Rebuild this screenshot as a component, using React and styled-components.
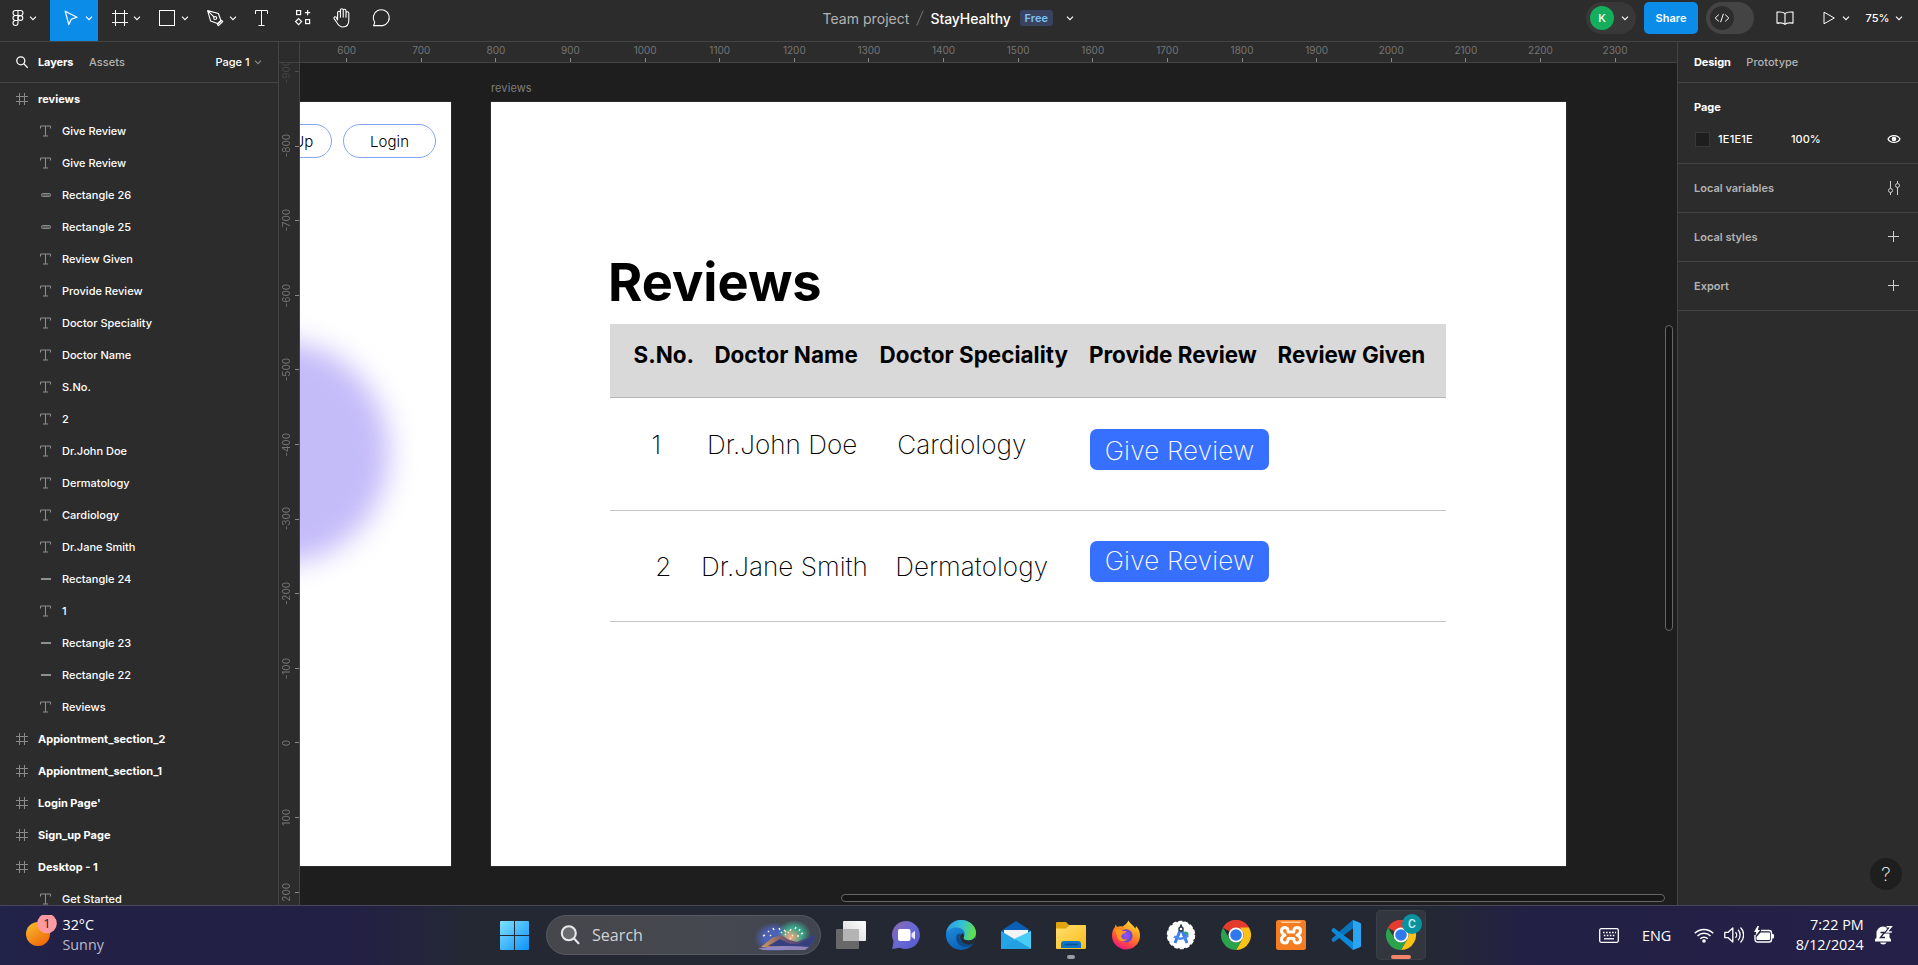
import React from "react";
import styled, { createGlobalStyle, css } from "styled-components";

const GlobalStyle = createGlobalStyle`
  * { box-sizing: border-box; }
  html, body { margin: 0; padding: 0; background: #1e1e1e; }
  body { font-family: Inter, "Liberation Sans", sans-serif; overflow: hidden; }
`;

const line = "#444444";
const panel = "#2c2c2c";

/* ---------- shell ---------- */

const Shell = styled.div`
  display: flex;
  flex-direction: column;
  width: 1918px;
  height: 965px;
  overflow: hidden;
  color: #fff;
  font-size: 11px;
`;

const Workspace = styled.div`
  display: flex;
  flex: 1;
  min-height: 0;
`;

/* ---------- top bar ---------- */

const TopBar = styled.header`
  display: flex;
  justify-content: space-between;
  height: 42px;
  flex: none;
  background: ${panel};
  border-bottom: 1px solid ${line};
`;

const ToolGroup = styled.div`
  display: flex;
  width: 820px;
`;

const Tool = styled.div`
  display: flex;
  align-items: center;
  width: ${(p) => p.$width}px;
  height: 41px;
  padding: 0 4px 5px 8px;
  background: ${(p) => (p.$active ? "#0c8ce9" : "transparent")};
  svg { flex: none; }
`;

const TitleGroup = styled.div`
  display: flex;
  align-items: center;
  flex: 1;
  height: 36px;
  padding-left: 2.5px;
  font-size: 14px;
  white-space: nowrap;
`;

const ProjectName = styled.span`
  color: #b3b3b3;
  letter-spacing: 0.04px;
`;

const Slash = styled.span`
  width: 8px;
  height: 16px;
  margin: 0 6px 0 7px;
  display: flex;
`;

const FileName = styled.span`
  font-weight: 500;
  letter-spacing: -0.08px;
`;

const PlanBadge = styled.span`
  display: flex;
  align-items: center;
  justify-content: center;
  width: 33px;
  height: 16px;
  margin: 0 9px 0 9px;
  border-radius: 3px;
  background: #394360;
  color: #7cc4f8;
  font-size: 11px;
  font-weight: 600;
`;

const ActionGroup = styled.div`
  display: flex;
  align-items: center;
  width: 332px;
  height: 36px;
`;

const AvatarPill = styled.div`
  display: flex;
  align-items: center;
  gap: 3px;
  width: 50px;
  height: 32px;
  padding-left: 4px;
  border-radius: 16px;
  background: #383838;
`;

const Avatar = styled.span`
  display: flex;
  align-items: center;
  justify-content: center;
  width: 24px;
  height: 24px;
  border-radius: 50%;
  background: #14ae5c;
  font-size: 11px;
  font-weight: 500;
`;

const ShareButton = styled.button`
  width: 54px;
  height: 32px;
  margin: 0 8px;
  padding: 0;
  border: 0;
  border-radius: 5px;
  background: #0c8ce9;
  color: #fff;
  font: 600 11px Inter, sans-serif;
`;

const DevToggle = styled.div`
  display: flex;
  align-items: center;
  width: 48px;
  height: 32px;
  padding-left: 4px;
  border-radius: 16px;
  background: #444;
`;

const DevKnob = styled.span`
  display: flex;
  align-items: center;
  justify-content: center;
  width: 24px;
  height: 24px;
  border-radius: 50%;
  background: #2c2c2c;
`;

const ActionIcon = styled.span`
  display: flex;
  margin-left: ${(p) => p.$ml}px;
`;

const ZoomLevel = styled.span`
  margin: 0 0 0 15px;
  width: 24px;
  font-weight: 500;
`;

/* ---------- left panel ---------- */

const LeftPanel = styled.aside`
  width: 279px;
  flex: none;
  background: ${panel};
  border-right: 1px solid ${line};
  overflow: hidden;
`;

const PanelTabs = styled.div`
  display: flex;
  align-items: center;
  height: 41px;
  padding: 0 15px 0 16px;
  border-bottom: 1px solid ${line};
  font-weight: 500;
`;

const Tab = styled.span`
  margin-right: 15.5px;
  color: ${(p) => (p.$active ? "#fff" : "#b3b3b3")};
  font-weight: ${(p) => (p.$active ? 700 : 500)};
  letter-spacing: ${(p) => (p.$active ? "-0.1px" : "0.05px")};
`;

const PageName = styled.span`
  margin-left: auto;
  margin-right: 1.5px;
`;

const LayerRow = styled.div`
  display: flex;
  align-items: center;
  height: 32px;
  padding-left: ${(p) => (p.$child ? 38 : 14)}px;
  font-weight: ${(p) => (p.$child ? 500 : 700)};
  white-space: nowrap;
`;

const LayerIcon = styled.span`
  display: flex;
  width: 16px;
  height: 16px;
  margin-right: 8px;
`;

/* ---------- canvas ---------- */

const CanvasArea = styled.main`
  display: grid;
  grid-template-columns: 21px 1fr;
  grid-template-rows: 21px 1fr;
  flex: 1;
  min-width: 0;
  background: #1e1e1e;
`;

const RulerCorner = styled.div`
  background: ${panel};
  border-right: 1px solid ${line};
  border-bottom: 1px solid ${line};
`;

const TopRuler = styled.div`
  display: flex;
  padding-left: 9.4px;
  overflow: hidden;
  background: ${panel};
  border-bottom: 1px solid ${line};
`;

const TopMark = styled.div`
  display: flex;
  flex-direction: column;
  align-items: center;
  justify-content: space-between;
  flex: none;
  width: 74.62px;
  height: 20px;
  padding-top: 1.5px;
  color: #757575;
  font-size: 10px;
  line-height: 12px;
  &::after {
    content: "";
    width: 1px;
    height: 4px;
    background: #8a8a8a;
  }
`;

const SideRuler = styled.div`
  overflow: hidden;
  min-height: 0;
  background: ${panel};
  border-right: 1px solid ${line};
`;

const SideMarks = styled.div`
  display: flex;
  flex-direction: column;
  margin-top: -28.9px;
`;

const SideMark = styled.div`
  display: flex;
  align-items: center;
  justify-content: space-between;
  flex: none;
  height: 74.62px;
  padding-left: 1px;
  color: #757575;
  opacity: ${(p) => (p.$faded ? 0.35 : 1)};
  font-size: 10px;
  line-height: 12px;
  span {
    writing-mode: vertical-rl;
    transform: rotate(180deg);
  }
  &::after {
    content: "";
    width: 4px;
    height: 1px;
    background: #8a8a8a;
  }
`;

const Stage = styled.div`
  position: relative;
  overflow: hidden;
  min-width: 0;
  min-height: 0;
`;

const Artboard = styled.section`
  position: absolute;
  left: ${(p) => p.$x}px;
  top: 39px;
  width: ${(p) => p.$w}px;
  height: 764px;
  background: #fff;
  box-shadow: 0 0 0 0.5px #55555577;
  overflow: hidden;
`;

const ArtboardLabel = styled.span`
  position: absolute;
  left: 191px;
  top: 18px;
  color: #7d7d7d;
  font-size: 11px;
  line-height: 14px;
  letter-spacing: 0.1px;
`;

const BlurredCircle = styled.div`
  position: absolute;
  left: -134px;
  top: 239px;
  width: 223px;
  height: 223px;
  border-radius: 50%;
  background: #c4bbf9;
  filter: blur(14px);
`;

const PillButton = styled.div`
  position: absolute;
  left: ${(p) => p.$x}px;
  top: 22px;
  display: flex;
  align-items: center;
  justify-content: center;
  width: 93px;
  height: 34px;
  border: 1px solid #85a5fb;
  border-radius: 17px;
  color: #000;
  font-size: 15px;
  font-weight: 290;
  letter-spacing: 0.1px;
`;

/* A text node is placed by the left end of its baseline. */
const TextNode = styled.span`
  position: absolute;
  left: ${(p) => p.$x}px;
  top: ${(p) => p.$base - p.$size * 0.864}px;
  font-size: ${(p) => p.$size}px;
  line-height: 1;
  white-space: pre;
  color: #000;
  ${(p) =>
    p.$kind === "title" &&
    css`
      font-weight: 680;
    `}
  ${(p) =>
    p.$kind === "head" &&
    css`
      font-weight: 650;
      letter-spacing: 0.03px;
    `}
  ${(p) =>
    p.$kind === "cell" &&
    css`
      font-weight: 250;
      letter-spacing: 0.02px;
    `}
`;

const HeadBand = styled.div`
  position: absolute;
  left: 119px;
  top: 222px;
  width: 836px;
  height: 74px;
  background: #d9d9d9;
  border-bottom: 1px solid #b7b7b7;
`;

const RowLine = styled.div`
  position: absolute;
  left: 119px;
  top: ${(p) => p.$y}px;
  width: 836px;
  height: 1px;
  background: #c4c4c4;
`;

const ReviewButton = styled.div`
  position: absolute;
  left: 599px;
  top: ${(p) => p.$y}px;
  width: 179px;
  height: 41px;
  border-radius: 7px;
  background: #3770ff;
  color: #fff;
  font-size: 26px;
  font-weight: 250;
  line-height: ${(p) => p.$lh}px;
  text-align: center;
  letter-spacing: 0.22px;
  white-space: nowrap;
`;

const ScrollThumb = styled.div`
  position: absolute;
  background: #161616;
  border: 1px solid #666;
  border-radius: 4px;
  ${(p) =>
    p.$vertical
      ? css`
          left: 1365px;
          top: 262px;
          width: 8px;
          height: 306px;
        `
      : css`
          left: 541px;
          top: 831px;
          width: 824px;
          height: 8px;
        `}
`;

/* ---------- right panel ---------- */

const RightPanel = styled.aside`
  position: relative;
  width: 241px;
  flex: none;
  background: ${panel};
  border-left: 1px solid ${line};
`;

const PageSection = styled.div`
  height: 81px;
  padding: 8px 16px 0;
  border-bottom: 1px solid ${line};
`;

const SectionTitle = styled.div`
  height: 32px;
  line-height: 32px;
  font-weight: 700;
`;

const FillRow = styled.div`
  display: flex;
  align-items: center;
  height: 32px;
  font-weight: 500;
`;

const Swatch = styled.span`
  width: 15px;
  height: 15px;
  margin: 0 8px 0 1px;
  background: #1e1e1e;
  border: 1px solid #383838;
`;

const FillHex = styled.span`
  width: 73px;
  letter-spacing: 0.22px;
`;

const RightIcon = styled.span`
  display: flex;
  margin-left: auto;
`;

const CollapsedSection = styled.div`
  display: flex;
  align-items: center;
  height: 49px;
  padding: 0 16px;
  border-bottom: 1px solid ${line};
  color: #b3b3b3;
  font-weight: 600;
`;

const HelpButton = styled.div`
  position: absolute;
  right: 16px;
  bottom: 15px;
  display: flex;
  align-items: center;
  justify-content: center;
  width: 32px;
  height: 32px;
  border-radius: 50%;
  background: #1e1e1e;
  font-size: 19px;
  font-weight: 250;
`;

/* ---------- taskbar ---------- */

const Taskbar = styled.footer`
  display: flex;
  height: 60px;
  flex: none;
  border-top: 1px solid #49485a;
  background: linear-gradient(90deg, #212349 0, #232046 60px, #232046 350px, #242833 470px, #242833 1430px, #232046 1530px, #242047 100%);
  font-family: "Open Sans", "Noto Sans", sans-serif;
`;

const Weather = styled.div`
  display: flex;
  align-items: flex-start;
  width: 490px;
  padding: 9px 0 0 24px;
`;

const WeatherText = styled.div`
  margin-left: 4.5px;
  font-size: 14.3px;
  line-height: 20px;
  div + div { color: #b9b9c8; }
`;

const AppRow = styled.div`
  display: flex;
  align-items: flex-start;
  gap: 5px;
  padding-top: 4px;
  width: 1109px;
`;

const AppSlot = styled.div`
  position: relative;
  display: flex;
  align-items: center;
  justify-content: center;
  width: 50px;
  height: 50px;
  border-radius: 5px;
  ${(p) =>
    p.$active &&
    css`
      background: #32363f;
      box-shadow: inset 0 0 0 1px #3b3f48;
    `}
  ${(p) =>
    p.$mark &&
    css`
      &::after {
        content: "";
        position: absolute;
        bottom: 1px;
        left: 50%;
        width: ${p.$active ? 20 : 8}px;
        height: 4px;
        margin-left: ${p.$active ? -10 : -4}px;
        border-radius: 2px;
        background: ${p.$mark};
      }
    `}
`;

const SearchBox = styled.div`
  display: flex;
  align-items: center;
  width: 275px;
  height: 40px;
  margin: 5px 0 0 1px;
  padding: 0 4px 0 13px;
  border: 1px solid #575a62;
  border-radius: 20px;
  background: linear-gradient(90deg, #46474c, #45484f 60%, #41454f);
  color: #d2d2d4;
  font-size: 16.1px;
`;

const SearchLabel = styled.span`
  flex: 1;
  margin-left: 12px;
`;

const Tray = styled.div`
  display: flex;
  align-items: center;
  flex: 1;
  padding-bottom: 1px;
  font-size: 14.4px;
`;

const TrayItem = styled.span`
  display: flex;
  margin-left: ${(p) => p.$ml}px;
`;

const Clock = styled.div`
  width: 82px;
  margin-right: 11px;
  text-align: right;
  line-height: 20px;
`;

/* ---------- interface icons ---------- */

const Svg = ({ w = 16, h = w, box, sw = 1, stroke = "#fff", children }) => (
  <svg width={w} height={h} viewBox={box || `0 0 ${w} ${h}`} fill="none" stroke={stroke} strokeWidth={sw}>
    {children}
  </svg>
);

const Chevron = ({ color = "#fff" }) => (
  <Svg w={10} stroke={color} sw={1.1}>
    <path d="M2 3.6 5 6.6 8 3.6" />
  </Svg>
);

const FigmaIcon = () => (
  <Svg w={20} h={22} box="1 0 20 22" sw={1.1}>
    <path d="M11 3.500H8.500a2.400 2.400 0 0 0 0 5H11zM11 3.500h2.500a2.400 2.400 0 0 1 0 5H11zM11 8.500H8.500a2.500 2.500 0 0 0 0 5H11zM11 13.500H8.500a2.500 2.500 0 1 0 2.500 2.500z" />
    <circle cx="13.400" cy="11" r="2.400" />
  </Svg>
);
const MoveIcon = () => (
  <Svg w={26} sw={1.2}><path d="M7.200 6.200 19 12.200l-5.600 1.900-2.600 5.500z" strokeLinejoin="round" /></Svg>
);
const FrameIcon = () => (
  <Svg w={26}><path d="M9.500 5v16M18.500 5v16M6 8.500h16M6 17.500h16" /></Svg>
);
const RectIcon = () => (
  <Svg w={26}><rect x="5.500" y="5.500" width="15" height="15" /></Svg>
);
const PenIcon = () => (
  <Svg w={26} sw={1.1}>
    <path d="M5.600 5.600 8.600 16.100l6.900 2.500 3.300-3.300-2.400-6.800zM5.600 5.600l6.800 6.700M15.400 19.600l4.200-4.200 1.100 1.100-4.200 4.200z" strokeLinejoin="round" />
    <circle cx="13.200" cy="13" r="1.500" />
  </Svg>
);
const TextIcon = () => (
  <Svg w={26}><path d="M5.500 9V5.500h12V9M11.500 5.500v15M8.500 20.500h6" /></Svg>
);
const ResourcesIcon = () => (
  <Svg w={26} sw={1.2}>
    <rect x="6.600" y="5.600" width="4" height="4" />
    <rect x="15.600" y="14.600" width="4" height="4" />
    <path d="M17.600 5v5.200M15 7.600h5.200M8.600 13.600l3 3-3 3-3-3z" />
  </Svg>
);
const HandIcon = () => (
  <Svg w={26} box="1 0.500 26 26" sw={1.1}>
    <path
      d="M8.600 15.400V8.200a1.400 1.400 0 0 1 2.800 0v4.600V5.600a1.400 1.400 0 0 1 2.800 0v7V6.200a1.400 1.400 0 0 1 2.800 0v6.600V8.600a1.400 1.400 0 0 1 2.800 0v7.200c0 4.600-2.600 6.700-5.800 6.700-3.400 0-4.600-1.700-6-4.200l-2.900-4.200c-.7-1.300 1-2.400 2.100-1.400z"
      strokeLinejoin="round"
    />
  </Svg>
);
const CommentIcon = () => (
  <Svg w={26} sw={1.1} box="0.500 0 26 26">
    <path d="M4 20.600c.6-.9 1.100-2.100 1.200-3.300A8 8 0 1 1 13.200 20.600z" strokeLinejoin="round" />
  </Svg>
);
const CodeIcon = () => (
  <Svg w={16} sw={1}><path d="M4.800 4.600 1.200 8l3.600 3.400M11.200 4.600 14.800 8l-3.600 3.400M9.400 3.800 6.600 12.200" /></Svg>
);
const BookIcon = () => (
  <Svg w={18} sw={1.1}>
    <path d="M9 4.6C7.400 2.900 4.500 2.700 1 3.100V14.100C4.500 13.600 7.400 13.800 9 15.400C10.600 13.800 13.500 13.600 17 14.100V3.100C13.500 2.700 10.600 2.900 9 4.600zV15.400" strokeLinejoin="round" />
  </Svg>
);
const PlayIcon = () => (
  <Svg w={14}><path d="M2 1.200 12.300 7 2 12.800z" strokeLinejoin="round" /></Svg>
);
const MagnifierIcon = () => (
  <Svg w={13} sw={1.3} box="0.500 0.500 13 13"><circle cx="5.300" cy="5.300" r="4" /><path d="m8.300 8.300 3.900 3.900" /></Svg>
);

const LayerFrame = () => (
  <Svg w={16} stroke="#8a8a8a"><path d="M5.500 2v12M10.500 2v12M2 5.500h12M2 10.500h12" /></Svg>
);
const LayerText = () => (
  <Svg w={16} stroke="#8f8f8f"><path d="M2.500 5.500v-2.500h10v2.500M7.500 3v10M5 13h5" /></Svg>
);
const LayerRounded = () => (
  <Svg w={16} stroke="#8a8a8a"><rect x="3.500" y="6.500" width="9" height="3" rx="1" fill="#5a5a5a" /></Svg>
);
const LayerLine = () => (
  <Svg w={16} stroke="#8f8f8f" sw={2}><path d="M3 8h10" /></Svg>
);

const EyeIcon = () => (
  <Svg w={16} sw={1.2}>
    <path d="M2 8c2.200-4.600 9.800-4.600 12 0-2.200 4.600-9.800 4.600-12 0z" />
    <circle cx="8" cy="8" r="1.700" fill="#fff" />
  </Svg>
);
const SlidersIcon = () => (
  <Svg w={16} stroke="#d0d0d0">
    <path d="M4.500 1v7.500M4.500 12.500v2.500M11.500 1v2M11.500 7.500V15" />
    <circle cx="4.500" cy="10.500" r="2" /><circle cx="11.500" cy="5.500" r="2" />
  </Svg>
);
const PlusIcon = () => (
  <Svg w={16} stroke="#d0d0d0"><path d="M7.500 2v11M2 7.500h11" /></Svg>
);

/* ---------- taskbar icons ---------- */

const WeatherIcon = () => (
  <svg width="34" height="34" viewBox="0 0 34 34">
    <defs>
      <linearGradient id="sun" x1="0" y1="0" x2="0.7" y2="1">
        <stop offset="0" stopColor="#f8bf2e" />
        <stop offset="1" stopColor="#f1690c" />
      </linearGradient>
    </defs>
    <circle cx="14" cy="19" r="12" fill="url(#sun)" />
    <circle cx="23" cy="8.500" r="9.800" fill="#ff9aa2" />
    <text x="23" y="13" fontSize="13" textAnchor="middle" fill="#222" fontFamily="Open Sans">1</text>
  </svg>
);

const WindowsIcon = () => (
  <svg width="30" height="30" viewBox="0 0 30 30">
    <defs>
      <linearGradient id="win" x1="0" y1="0" x2="1" y2="1">
        <stop offset="0" stopColor="#7fe0ff" />
        <stop offset="1" stopColor="#0d92f9" />
      </linearGradient>
    </defs>
    <path fill="url(#win)" d="M1 1h13v14H0V2a1 1 0 0 1 1-1zM15 1h13a1 1 0 0 1 1 1v13H15zM0 16h14v14H1a1 1 0 0 1-1-1zM15 16h14v13a1 1 0 0 1-1 1H15z" />
  </svg>
);

const SearchGlass = () => (
  <svg width="20" height="20" viewBox="0 0 20 20" fill="none" stroke="#e8e8e8" strokeWidth="2.1">
    <circle cx="8.800" cy="8.200" r="7" fill="#6a6b70" /><path d="m13.800 13.300 4.700 4.900" strokeLinecap="round" />
  </svg>
);

const SearchArt = () => (
  <svg width="62" height="32" viewBox="0 0 62 32">
    <defs>
      <radialGradient id="glowA"><stop offset="0.5" stopColor="#4b62b8" /><stop offset="1" stopColor="#4b62b8" stopOpacity="0" /></radialGradient>
      <radialGradient id="glowB"><stop offset="0.5" stopColor="#3aa58c" /><stop offset="1" stopColor="#3aa58c" stopOpacity="0" /></radialGradient>
      <radialGradient id="glowC"><stop offset="0.1" stopColor="#f0a67c" /><stop offset="1" stopColor="#f0a67c" stopOpacity="0" /></radialGradient>
      <linearGradient id="hill" x1="0" y1="0" x2="1" y2="0"><stop offset="0" stopColor="#d09a55" /><stop offset="0.5" stopColor="#6b4d7a" /><stop offset="1" stopColor="#34427e" /></linearGradient>
    </defs>
    <ellipse cx="20" cy="19" rx="20" ry="16" fill="url(#glowA)" />
    <ellipse cx="40" cy="15" rx="17" ry="14" fill="url(#glowB)" />
    <ellipse cx="37" cy="18" rx="11" ry="9" fill="url(#glowC)" />
    <path d="M7 28 18 19l9-3 8 5 8 2 18-7c0 6-3 10-6 12z" fill="url(#hill)" />
    <path d="m14 27 12-7 10 5 8 0 15-7c-1 6-3 9-5 10z" fill="#36407e" />
    <path d="M4 29.500c16-3 34-3 51-1.500l-4 3H9z" fill="#a294d2" opacity="0.800" />
    <path d="m9 17 2-1M14 12l1 1M19 9l1 2M25 9l1 2M27 13l1 1M30 11l2 2M31 15l1 1M34 13l1 1M37 10l-1 2M42 8l-1 2M46 10l-1 2M49 14l-2 1M38 16l1 1M43 17l2 0M16 17l1-1M36 19l1 1" stroke="#fff3d6" strokeWidth="1.4" />
  </svg>
);

const TaskViewIcon = () => (
  <svg width="32" height="30" viewBox="0 0 32 30">
    <defs><linearGradient id="tv" x1="0" y1="1" x2="1" y2="0"><stop offset="0" stopColor="#d2d2d2" /><stop offset="1" stopColor="#fff" /></linearGradient></defs>
    <rect x="1" y="9" width="23" height="20" rx="1" fill="#686868" />
    <rect x="8" y="1" width="23" height="20" rx="1" fill="url(#tv)" />
    <rect x="8" y="9" width="16" height="12" fill="#b4b4b4" />
  </svg>
);

const ChatIcon = () => (
  <svg width="30" height="30" viewBox="0 0 30 30">
    <defs><linearGradient id="chat" x1="0" y1="0" x2="1" y2="1"><stop offset="0" stopColor="#8a69ad" /><stop offset="0.5" stopColor="#6a68d2" /><stop offset="1" stopColor="#5457cf" /></linearGradient></defs>
    <path d="M15 1a14 14 0 1 1-6 26.700L1.200 29l1.400-7.500A14 14 0 0 1 15 1z" fill="url(#chat)" />
    <rect x="7" y="9" width="12.500" height="12" rx="2" fill="#fff" />
    <path d="m20.500 13.500 3.500-2.800v8.800l-3.500-2.800z" fill="#e8e8ff" />
  </svg>
);

const EdgeIcon = () => (
  <svg width="30" height="30" viewBox="0 0 30 30">
    <defs>
      <linearGradient id="edgeA" x1="0" y1="0.3" x2="1" y2="0.5"><stop offset="0" stopColor="#2f9ae8" /><stop offset="0.5" stopColor="#33c2d3" /><stop offset="1" stopColor="#66df45" /></linearGradient>
      <linearGradient id="edgeB" x1="0" y1="0" x2="0.4" y2="1"><stop offset="0" stopColor="#2496e4" /><stop offset="1" stopColor="#0b63b8" /></linearGradient>
    </defs>
    <circle cx="15" cy="15" r="15" fill="url(#edgeB)" />
    <path d="M.2 13C1.200 5.500 7.500 0 15 0c8.500 0 15 6 15 12.500 0 5-3.500 8-7.500 8-4.500 0-5.500-1.800-4.800-2.900C20.500 13 17 7.600 11 7.600 5.800 7.600 1.800 9.500.2 13z" fill="url(#edgeA)" />
    <path d="M10.500 15.500c-2 8 5.500 13 12 11.200 2.500-.7 4.200-2.200 5.200-3.800 0 0-9 3.800-13.500-3.600-1-2-.6-4 .5-5.500-2 0-3.700.5-4.200 1.700z" fill="#114a8b" />
    <path d="M17.700 17.600c-.7 1.100.3 2.900 4.800 2.900 2.500 0 5-1.200 6.300-3.300L30 20l-3 3.500c-6 2.500-12.500-.5-13-6.500 0-2 1.500-3.500 2.500-3.700 1.500.8 2 2.800 1.200 4.300z" fill="#252a34" />
  </svg>
);

const MailIcon = () => (
  <svg width="30" height="30" viewBox="0 0 30 30">
    <path d="M0 11 15 1l15 10v6H0z" fill="#0a60b8" />
    <path d="M3 10h24v9L15 22 3 18z" fill="#f3f3f3" />
    <path d="M0 11v18h30z" fill="#26a4e8" />
    <path d="M30 11v18L13 19z" fill="#48cdf6" />
    <path d="m0 29 15-9.500L30 29z" fill="#23a0e2" />
  </svg>
);

const ExplorerIcon = () => (
  <svg width="30" height="30" viewBox="0 0 30 30">
    <defs><linearGradient id="folder" x1="0" y1="0" x2="1" y2="1"><stop offset="0" stopColor="#ffdf70" /><stop offset="1" stopColor="#fcbc19" /></linearGradient></defs>
    <path d="M0 3a1 1 0 0 1 1-1h9l3 3h16v6H0z" fill="#e2a30e" />
    <path d="M0 8.500h10L13.500 5H29a1 1 0 0 1 1 1v22a1 1 0 0 1-1 1H1a1 1 0 0 1-1-1z" fill="url(#folder)" />
    <path d="M5 28v-4a3 3 0 0 1 3-3h14a3 3 0 0 1 3 3v4z" fill="#0f73c7" />
    <path d="M8.500 24.500h13" stroke="#0b4f93" strokeWidth="1.5" />
  </svg>
);

const FirefoxIcon = () => (
  <svg width="30" height="30" viewBox="0 0 30 30">
    <defs>
      <linearGradient id="ff" x1="0.8" y1="0" x2="0.3" y2="1"><stop offset="0" stopColor="#ffe83b" /><stop offset="0.45" stopColor="#ff8a1c" /><stop offset="0.8" stopColor="#ff3b4f" /><stop offset="1" stopColor="#e0178c" /></linearGradient>
      <radialGradient id="ffc"><stop offset="0" stopColor="#9059ff" /><stop offset="1" stopColor="#6b3ed0" /></radialGradient>
    </defs>
    <path d="M17.500.5c1 3 5 4.500 6.800 8.300L25 6c3 3 4.200 6.500 4 10A14 13.700 0 0 1 1 15.500c0-4 1.300-6.800 3-8.500l.5-2.500c1 1 1.300 2 1.500 2.500 2-.8 4-.8 5.500-.2C12.500 5.500 15.500 4.500 17.500.5z" fill="url(#ff)" />
    <circle cx="15" cy="15.800" r="6.600" fill="url(#ffc)" />
    <path d="M4 9.500c3-1.500 6.500.2 7.500 1.500h4c-.5 2.500-4 2.500-5 4.500-1 3 3 5 6 3.500-2.500 4-10.500 3-10.500-3.500z" fill="#ff9a1f" />
  </svg>
);

const StudioIcon = () => (
  <svg width="30" height="30" viewBox="0 0 30 30">
    <circle cx="15" cy="15" r="13.500" fill="#fff" />
    <circle cx="15" cy="15" r="13.500" fill="none" stroke="#fff" strokeWidth="1.5" strokeDasharray="4 2.060" />
    <circle cx="19.500" cy="14.500" r="3" fill="#2fa866" />
    <path d="M14.300 10 9 23M15.700 10l5.300 13" stroke="#3b7ded" strokeWidth="3" />
    <path d="M8 16.500c4 3 10 3 14-1" fill="none" stroke="#4a8af4" strokeWidth="2.5" />
    <path d="M15 4.500v3" stroke="#303a44" strokeWidth="2" />
    <circle cx="15" cy="9" r="2" fill="#fff" stroke="#303a44" strokeWidth="1.5" />
  </svg>
);

const ChromeIcon = ({ badge }) => (
  <svg width="30" height="30" viewBox="0 0 30 30" overflow="visible">
    <path d="M15 15 2 7.500A15 15 0 0 1 28 7.500z" fill="#e33b2e" />
    <path d="M15 0a15 15 0 0 1 13 7.500H15A7.500 7.500 0 0 0 8.500 11.200L2 7.500A15 15 0 0 1 15 0z" fill="#e33b2e" />
    <path d="M28 7.500A15 15 0 0 1 15 30l6.500-11.200A7.500 7.500 0 0 0 21.500 11.200L19 7.500z" fill="#fbc116" />
    <path d="M2 7.500A15 15 0 0 0 15 30l6.500-11.200a7.500 7.500 0 0 1-13 0z" fill="#2ba24c" />
    <circle cx="15" cy="15" r="7.500" fill="#fff" />
    <circle cx="15" cy="15" r="5.800" fill="#3079ed" />
    {badge && (
      <g>
        <circle cx="26" cy="4" r="10" fill="#0a929f" />
        <text x="26" y="8.300" fontSize="12" fontWeight="500" fill="#c7f0f2" textAnchor="middle" fontFamily="Roboto">{badge}</text>
      </g>
    )}
  </svg>
);

const XamppIcon = () => (
  <svg width="30" height="30" viewBox="0 0 30 30">
    <rect width="30" height="30" rx="2.500" fill="#f57c20" />
    <path d="M4 1.500h22l-2 1.500H6z" fill="#ffd0a0" />
    <path
      d="M9 15.200C6.500 14.200 5.500 12.800 5.500 11 5.500 8.800 7 7.500 9 7.500c2.800 0 3.200 2 3.200 4.500h5.600c0-2.500.4-4.500 3.200-4.500 2 0 3.500 1.300 3.500 3.500 0 1.800-1 3.200-3.500 4.200 2.500 1 3.500 2.400 3.500 4.200 0 2.200-1.500 3.500-3.500 3.500-2.800 0-3.200-2-3.200-4.500h-5.600c0 2.500-.4 4.500-3.200 4.500-2 0-3.500-1.300-3.500-3.500 0-1.800 1-3.200 3.500-4.200z"
      fill="none" stroke="#fff" strokeWidth="3" strokeLinejoin="round"
    />
  </svg>
);

const CodeEditorIcon = () => (
  <svg width="30" height="30" viewBox="0 0 30 30">
    <path d="M22 0 1 18.500c-1 1 0 3.500 2 3.500L22 8z" fill="#0f7fc8" />
    <path d="M22 30 1 11.500C0 10.500 1 8 3 8l19 14z" fill="#0a8ad8" />
    <path d="m22 0 7 2.800a1.500 1.500 0 0 1 1 1.500v21.400a1.500 1.500 0 0 1-1 1.500L22 30z" fill="#2ba5f2" />
    <path d="m22 8.300-9 6.700 9 6.700z" fill="#262833" />
    <path d="M22 0v8.300L13 15l-4.500-3.500z" fill="#0873bb" />
  </svg>
);

const KeyboardIcon = () => (
  <svg width="20" height="15" viewBox="0 0 20 15" fill="none" stroke="#fff" strokeWidth="1.3">
    <rect x="0.700" y="0.700" width="18.600" height="13.600" rx="1.500" />
    <path d="M4 4.500h13M4.800 7.500h12" strokeDasharray="1.600 1.400" strokeWidth="1.5" /><path d="M5 10.800h10" />
  </svg>
);
const WifiIcon = () => (
  <svg width="20" height="16" viewBox="0 0 20 16" fill="none" stroke="#fff" strokeWidth="1.5">
    <path d="M.8 6.200a13 13 0 0 1 18.400 0M3.500 9a9.200 9.200 0 0 1 13 0M6.200 11.700a5.400 5.400 0 0 1 7.600 0" />
    <circle cx="10" cy="14" r="1.800" fill="#fff" stroke="none" />
  </svg>
);
const SpeakerIcon = () => (
  <svg width="20" height="18" viewBox="0 0 20 18" fill="none" stroke="#fff" strokeWidth="1.3" strokeLinejoin="round">
    <path d="M.8 6.300h3.400L8.800 2v14l-4.600-4.300H.8z" /><path d="M11.500 6.200a4 4 0 0 1 0 5.600M14 3.800a7.400 7.400 0 0 1 0 10.400M16.500 1.500a10.600 10.600 0 0 1 0 15" />
  </svg>
);
const BatteryIcon = () => (
  <svg width="20" height="18" viewBox="0 0 20 18">
    <path d="M7 4.500h8a2.500 2.500 0 0 1 2.500 2.500v6.500A2.500 2.500 0 0 1 15 16H3.500A2.500 2.500 0 0 1 1 13.500V9" fill="none" stroke="#fff" strokeWidth="1.4" />
    <path d="M6.500 6.500H15a1 1 0 0 1 1 1V13a1 1 0 0 1-1 1H3.500a1 1 0 0 1-1-1v-2zM18 8h1a1 1 0 0 1 1 1v2.500a1 1 0 0 1-1 1h-1zM3.500 0 0 6h2.200L1.500 10 6.200 4H3.800L5 0z" fill="#fff" />
  </svg>
);
const BellIcon = () => (
  <svg width="18" height="19" viewBox="0 0 18 19">
    <path d="M0 15.500v-2l1.500-2V7a6.500 6.500 0 0 1 13 0v4.500l1.500 2v2zM5 16.500h6.500a3.300 2.500 0 0 1-6.500 0z" fill="#fff" />
    <path d="M5.500 6.500h4L5.500 11.500h4.500" fill="none" stroke="#232046" strokeWidth="1.4" />
    <path d="M11.500.8H16L11.800 6h4.700" fill="none" stroke="#232046" strokeWidth="3.2" />
    <path d="M11.500.8h4.800L12 6h4.800" fill="none" stroke="#fff" strokeWidth="1.4" />
  </svg>
);

/* ---------- data ---------- */

const layers = [
  ["frame", "reviews"],
  ["text", "Give Review"],
  ["text", "Give Review"],
  ["rounded", "Rectangle 26"],
  ["rounded", "Rectangle 25"],
  ["text", "Review Given"],
  ["text", "Provide Review"],
  ["text", "Doctor Speciality"],
  ["text", "Doctor Name"],
  ["text", "S.No."],
  ["text", "2"],
  ["text", "Dr.John Doe"],
  ["text", "Dermatology"],
  ["text", "Cardiology"],
  ["text", "Dr.Jane Smith"],
  ["line", "Rectangle 24"],
  ["text", "1"],
  ["line", "Rectangle 23"],
  ["line", "Rectangle 22"],
  ["text", "Reviews"],
  ["frame", "Appiontment_section_2"],
  ["frame", "Appiontment_section_1"],
  ["frame", "Login Page'"],
  ["frame", "Sign_up Page"],
  ["frame", "Desktop - 1"],
  ["text", "Get Started"],
];

const layerIcons = { frame: LayerFrame, text: LayerText, rounded: LayerRounded, line: LayerLine };

const topMarks = Array.from({ length: 18 }, (_, i) => 600 + i * 100);
const sideMarks = Array.from({ length: 12 }, (_, i) => -900 + i * 100);

/* x and baseline inside the artboard */
const texts = [
  ["title", 117, 199.3, 52.3, "Reviews"],
  ["head", 142.5, 261.4, 22.4, "S.No."],
  ["head", 223.4, 261.4, 22.4, "Doctor Name"],
  ["head", 388.6, 261.4, 22.4, "Doctor Speciality"],
  ["head", 597.9, 261.4, 22.4, "Provide Review"],
  ["head", 786.5, 261.4, 22.4, "Review Given"],
  ["cell", 160.3, 352.7, 26.1, "1"],
  ["cell", 216, 352.7, 26.1, "Dr.John Doe"],
  ["cell", 406.2, 352.7, 26.1, "Cardiology"],
  ["cell", 164.2, 474.4, 26.1, "2"],
  ["cell", 210, 474.4, 26.1, "Dr.Jane Smith"],
  ["cell", 404.2, 474.4, 26.1, "Dermatology"],
];

const tools = [
  [FrameIcon, true],
  [RectIcon, true],
  [PenIcon, true],
  [TextIcon, false],
  [ResourcesIcon, false],
  [HandIcon, false],
  [CommentIcon, false],
];

export default function App() {
  return (
    <Shell>
      <GlobalStyle />
      <TopBar>
        <ToolGroup>
          <Tool $width={50}><FigmaIcon /><Chevron /></Tool>
          <Tool $width={48} $active><MoveIcon /><Chevron /></Tool>
          {tools.map(([Icon, menu], i) => (
            <Tool key={i} $width={menu ? 48 : 40}>
              <Icon />
              {menu && <Chevron />}
            </Tool>
          ))}
        </ToolGroup>
        <TitleGroup>
          <ProjectName>Team project</ProjectName>
          <Slash><Svg w={8} h={16} stroke="#757575"><path d="M7.200.5.8 15.500" /></Svg></Slash>
          <FileName>StayHealthy</FileName>
          <PlanBadge>Free</PlanBadge>
          <ActionIcon $ml={3}><Chevron /></ActionIcon>
        </TitleGroup>
        <ActionGroup>
          <AvatarPill><Avatar>K</Avatar><ActionIcon $ml={3}><Chevron /></ActionIcon></AvatarPill>
          <ShareButton>Share</ShareButton>
          <DevToggle><DevKnob><CodeIcon /></DevKnob></DevToggle>
          <ActionIcon $ml={22}><BookIcon /></ActionIcon>
          <ActionIcon $ml={27.5}><PlayIcon /></ActionIcon>
          <ActionIcon $ml={5}><Chevron /></ActionIcon>
          <ZoomLevel>75%</ZoomLevel>
          <ActionIcon $ml={4}><Chevron /></ActionIcon>
        </ActionGroup>
      </TopBar>

      <Workspace>
        <LeftPanel>
          <PanelTabs>
            <ActionIcon $ml={0}><MagnifierIcon /></ActionIcon>
            <ActionIcon $ml={9} />
            <Tab $active>Layers</Tab>
            <Tab>Assets</Tab>
            <PageName>Page 1</PageName>
            <ActionIcon $ml={2}><Chevron color="#8a8a8a" /></ActionIcon>
          </PanelTabs>
          {layers.map(([kind, name], i) => {
            const Icon = layerIcons[kind];
            return (
              <LayerRow key={i} $child={kind !== "frame"}>
                <LayerIcon><Icon /></LayerIcon>
                {name}
              </LayerRow>
            );
          })}
        </LeftPanel>

        <CanvasArea>
          <RulerCorner />
          <TopRuler>{topMarks.map((n) => <TopMark key={n}>{n}</TopMark>)}</TopRuler>
          <SideRuler>
            <SideMarks>
              {sideMarks.map((n) => (
                <SideMark key={n} $faded={n === -900}><span>{n}</span></SideMark>
              ))}
            </SideMarks>
          </SideRuler>
          <Stage>
            <Artboard $x={0} $w={151}>
              <BlurredCircle />
              <PillButton $x={-61}>Sign Up</PillButton>
              <PillButton $x={43}>Login</PillButton>
            </Artboard>
            <ArtboardLabel>reviews</ArtboardLabel>
            <Artboard $x={191} $w={1075}>
              <HeadBand />
              <RowLine $y={408} />
              <RowLine $y={519} />
              <ReviewButton $y={327} $lh={43}>Give Review</ReviewButton>
              <ReviewButton $y={439} $lh={39}>Give Review</ReviewButton>
              {texts.map(([kind, x, base, size, label]) => (
                <TextNode key={label} $kind={kind} $x={x} $base={base} $size={size}>{label}</TextNode>
              ))}
            </Artboard>
            <ScrollThumb $vertical />
            <ScrollThumb />
          </Stage>
        </CanvasArea>

        <RightPanel>
          <PanelTabs>
            <Tab $active>Design</Tab>
            <Tab>Prototype</Tab>
          </PanelTabs>
          <PageSection>
            <SectionTitle>Page</SectionTitle>
            <FillRow>
              <Swatch />
              <FillHex>1E1E1E</FillHex>
              <span>100%</span>
              <RightIcon><EyeIcon /></RightIcon>
            </FillRow>
          </PageSection>
          <CollapsedSection>Local variables<RightIcon><SlidersIcon /></RightIcon></CollapsedSection>
          <CollapsedSection>Local styles<RightIcon><PlusIcon /></RightIcon></CollapsedSection>
          <CollapsedSection>Export<RightIcon><PlusIcon /></RightIcon></CollapsedSection>
          <HelpButton>?</HelpButton>
        </RightPanel>
      </Workspace>

      <Taskbar>
        <Weather>
          <WeatherIcon />
          <WeatherText><div>32°C</div><div>Sunny</div></WeatherText>
        </Weather>
        <AppRow>
          <AppSlot><WindowsIcon /></AppSlot>
          <SearchBox><SearchGlass /><SearchLabel>Search</SearchLabel><SearchArt /></SearchBox>
          <AppSlot><TaskViewIcon /></AppSlot>
          <AppSlot><ChatIcon /></AppSlot>
          <AppSlot><EdgeIcon /></AppSlot>
          <AppSlot><MailIcon /></AppSlot>
          <AppSlot $mark="#9a9ca2"><ExplorerIcon /></AppSlot>
          <AppSlot><FirefoxIcon /></AppSlot>
          <AppSlot><StudioIcon /></AppSlot>
          <AppSlot><ChromeIcon /></AppSlot>
          <AppSlot><XamppIcon /></AppSlot>
          <AppSlot><CodeEditorIcon /></AppSlot>
          <AppSlot $active $mark="#f4836a"><ChromeIcon badge="C" /></AppSlot>
        </AppRow>
        <Tray>
          <TrayItem $ml={0}><KeyboardIcon /></TrayItem>
          <TrayItem $ml={23}>ENG</TrayItem>
          <TrayItem $ml={23}><WifiIcon /></TrayItem>
          <TrayItem $ml={10}><SpeakerIcon /></TrayItem>
          <TrayItem $ml={10}><BatteryIcon /></TrayItem>
          <TrayItem $ml={7.5}><Clock>7:22 PM<br />8/12/2024</Clock></TrayItem>
          <BellIcon />
        </Tray>
      </Taskbar>
    </Shell>
  );
}
